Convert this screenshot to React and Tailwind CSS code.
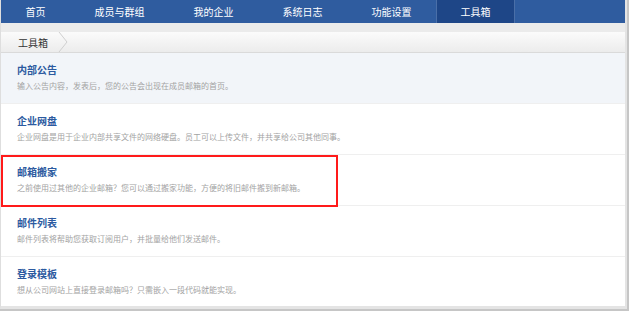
const tabs = [
  { label: '首页', w: 'w-[69px]' },
  { label: '成员与群组', w: 'w-[99px]' },
  { label: '我的企业', w: 'w-[89px]' },
  { label: '系统日志', w: 'w-[89px]' },
  { label: '功能设置', w: 'w-[89px]' },
  { label: '工具箱', w: 'w-[79px]', active: true },
]

const tools = [
  { title: '内部公告', desc: '输入公告内容，发表后，您的公告会出现在成员邮箱的首页。', hover: true },
  { title: '企业网盘', desc: '企业网盘是用于企业内部共享文件的网络硬盘。员工可以上传文件，并共享给公司其他同事。' },
  { title: '邮箱搬家', desc: '之前使用过其他的企业邮箱？您可以通过搬家功能，方便的将旧邮件搬到新邮箱。', marked: true },
  { title: '邮件列表', desc: '邮件列表将帮助您获取订阅用户，并批量给他们发送邮件。' },
  { title: '登录模板', desc: '想从公司网站上直接登录邮箱吗？只需嵌入一段代码就能实现。' },
]

export default function App() {
  return (
    <div className="w-[629px] h-[311px] bg-[#c6c6c6] font-['Noto_Sans_CJK_SC',sans-serif] overflow-hidden">
      <div className="w-[627px] h-[309px] flex flex-col bg-white border-l border-[#dedede] border-r-[2px] border-r-[#e4e4e4] border-b-[3px] border-b-[#e4e4e4]">
        {/* top nav */}
        <div className="h-[23px] flex bg-[#2f5c9f] shrink-0">
          {tabs.map(t => (
            <div
              key={t.label}
              className={`${t.w} h-full flex items-center justify-center text-[10px] text-white ${t.active ? 'bg-[#1e4687] border-x border-[#4a6fa8]' : ''}`}
            >
              {t.label}
            </div>
          ))}
        </div>

        {/* breadcrumb */}
        <div className="h-[9px] bg-[#ebebeb] shrink-0" />
        <div className="h-[21px] flex items-center bg-gradient-to-b from-[#fbfbfb] to-[#ececec] border-b border-[#dadada] shrink-0">
          <span className="pl-[17px] text-[10px] text-[#333]">工具箱</span>
          <svg width="12" height="20" viewBox="0 0 12 20" className="ml-[10px]">
            <path d="M1 0 L9 10 L1 20" stroke="#cfcfcf" strokeWidth="1" fill="none" />
          </svg>
        </div>

        {/* tool list */}
        <div className="flex-1 flex flex-col">
          {tools.map(t => (
            <div
              key={t.title}
              className={`relative h-[51px] pl-[16px] pt-[10px] border-b border-[#efefef] last:border-b-0 last:h-auto last:flex-1 ${t.hover ? 'bg-[#f2f5f9]' : ''}`}
            >
              <div className="text-[10px] leading-[14px] font-bold text-[#2c5aa0]">{t.title}</div>
              <div className="mt-[3px] text-[8px] leading-[11px] text-[#a3a3a3]">{t.desc}</div>
              {t.marked && (
                <div className="absolute left-0 top-0 w-[337px] h-[52px] border-2 border-[#ff1a1a]" />
              )}
            </div>
          ))}
        </div>
      </div>
    </div>
  )
}
